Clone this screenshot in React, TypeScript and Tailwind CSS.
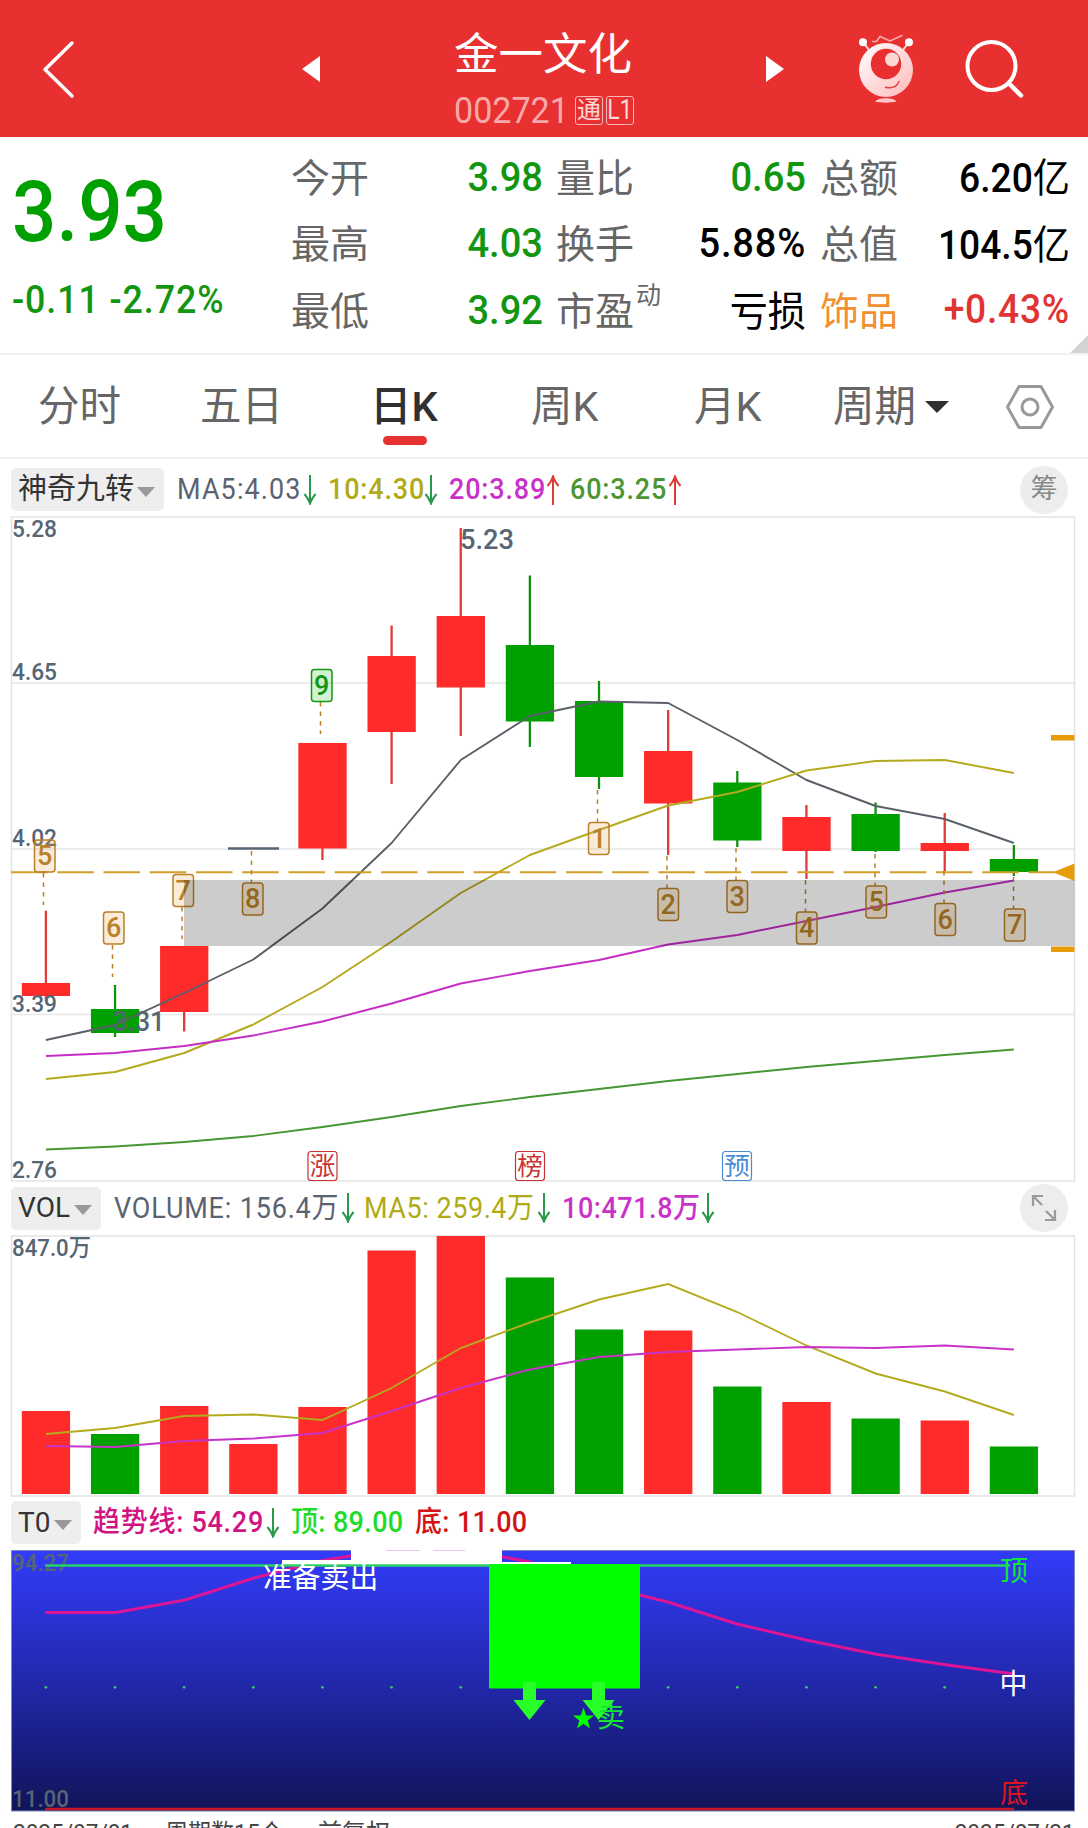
import React from "react";

const RED = "#ff2a2a";
const GREEN = "#00a000";
const SLATE = "#566573";
const FONT = "Roboto, 'Noto Sans CJK SC', sans-serif";

// horizontal centre of the n-th trading day
const dayX = (i: number) => 45.9 + i * 69.14;

const toPoints = (ys: number[]) => ys.map((y, i) => `${dayX(i)},${y}`).join(" ");

interface Candle {
  up: boolean;
  high: number;
  top: number;
  bottom: number;
  low: number;
}

const candles: (Candle | null)[] = [
  { up: true, high: 910.7, top: 983, bottom: 996, low: 1001 },
  { up: false, high: 985, top: 1009, bottom: 1033, low: 1037 },
  { up: true, high: 946, top: 946, bottom: 1012, low: 1031.5 },
  null,
  { up: true, high: 743, top: 743, bottom: 848.5, low: 860 },
  { up: true, high: 625.5, top: 656, bottom: 732, low: 784 },
  { up: true, high: 528, top: 616, bottom: 687.5, low: 736 },
  { up: false, high: 575.5, top: 645, bottom: 721.5, low: 747 },
  { up: false, high: 681, top: 701, bottom: 777, low: 789 },
  { up: true, high: 710, top: 751, bottom: 803.5, low: 855 },
  { up: false, high: 771, top: 782.5, bottom: 840.5, low: 847 },
  { up: true, high: 805, top: 817, bottom: 851, low: 879 },
  { up: false, high: 802.5, top: 814, bottom: 851, low: 852 },
  { up: true, high: 813, top: 843, bottom: 851, low: 871 },
  { up: false, high: 845, top: 859, bottom: 872, low: 876 },
];

const ma5 = [1040, 1025, 993, 959.5, 908.5, 843, 760, 716, 701.5, 703, 740, 780, 806, 819, 843];
const ma10 = [1079, 1072, 1053, 1024.5, 987, 941.5, 893, 855, 830, 805.5, 792, 770.5, 761, 760, 773];
const ma20 = [1056, 1053, 1046, 1035.5, 1021.5, 1003.5, 983.5, 971, 960, 944.5, 935, 921, 907, 892.5, 880.5];
const ma60 = [1149.5, 1146.5, 1142, 1136, 1127, 1117, 1106, 1097, 1089, 1081, 1074, 1067, 1061, 1055, 1049.5];

const counts = [
  { n: "5", x: 34.5, y: 840, line: 873 },
  { n: "6", x: 103.5, y: 912, line: 945 },
  { n: "7", x: 173, y: 874.5, line: 907 },
  { n: "8", x: 242.5, y: 883, line: 851 },
  { n: "9", x: 311.5, y: 669.5, line: 702 },
  { n: "1", x: 588.5, y: 822.5, line: 790 },
  { n: "2", x: 658, y: 888.5, line: 856 },
  { n: "3", x: 727, y: 880.5, line: 848 },
  { n: "4", x: 796.5, y: 912, line: 880 },
  { n: "5", x: 866, y: 886, line: 854 },
  { n: "6", x: 935, y: 903.5, line: 871 },
  { n: "7", x: 1004.5, y: 909, line: 877 },
];

const events = [
  { text: "涨", x: 308, color: "#c83232" },
  { text: "榜", x: 515.5, color: "#c83232" },
  { text: "预", x: 722.5, color: "#4a8ad4" },
];

const volumes = [1411, 1434, 1406, 1444, 1407, 1250.5, 1236, 1277.5, 1329.5, 1330.5, 1386.5, 1402, 1418.5, 1420.5, 1446.5];
const volumeUp = [true, false, true, true, true, true, true, false, false, true, false, true, false, true, false];
const volMa5 = [1434, 1428, 1416, 1414.5, 1420, 1388, 1348, 1322.5, 1299.5, 1284, 1312, 1345.5, 1373.5, 1391.5, 1415];
const volMa10 = [1446, 1447, 1441, 1438.5, 1433, 1411, 1388, 1369.5, 1357, 1352, 1349.5, 1347, 1348, 1345.5, 1349.5];

interface LabelProps {
  x: number;
  y: number;
  width: number;
  size?: number;
  color?: string;
  children: string;
}

function Label({ x, y, width, size = 24, color = SLATE, children }: LabelProps) {
  return (
    <text
      x={x}
      y={y}
      fontSize={size}
      fontWeight="500"
      fill={color}
      textLength={width}
      lengthAdjust="spacingAndGlyphs"
    >
      {children}
    </text>
  );
}

function Header() {
  return (
    <header className="flex h-[137px] bg-[#e83030] text-white">
      <svg className="ml-10 mt-10 h-[60px] w-10" viewBox="0 0 40 60" fill="none">
        <path d="M32 3 5 29.5 32 56" stroke="#fff" strokeWidth="3.5" strokeLinecap="round" strokeLinejoin="round" />
      </svg>
      <svg className="ml-[221px] mt-[55px] h-7 w-5" viewBox="0 0 20 28">
        <path d="M1 14 19 1V27Z" fill="#fff" />
      </svg>
      <div className="ml-[103px] flex w-[270px] flex-col pl-[30px]">
        <h1 className="mt-[33px] text-[44.5px] leading-none whitespace-nowrap">金一文化</h1>
        <div className="mt-[14px] flex items-center">
          <span className="w-[121px] origin-left scale-x-[0.92] text-[37px] leading-none text-[#f7a9a9]">
            002721
          </span>
          <span className="flex h-[29px] w-7 items-center justify-center rounded-[3px] border border-[#f9b6b6] text-[24px] leading-none text-[#fcd8d8]">
            通
          </span>
          <span className="ml-[3px] flex h-[29px] w-7 items-center justify-center rounded-[3px] border border-[#f9b6b6] text-[27px] leading-none text-[#fcd8d8]">
            <span className="scale-x-[0.85]">L1</span>
          </span>
        </div>
      </div>
      <svg className="ml-[71px] mt-[55px] h-7 w-5" viewBox="0 0 20 28">
        <path d="M19 14 1 1V27Z" fill="#fff" />
      </svg>
      {/* robot assistant */}
      <svg className="ml-[70px] mt-8 h-[72px] w-[62px]" viewBox="855 32 62 72" fill="none">
        <defs>
          <linearGradient id="robot" x1="0" y1="0" x2="1" y2="1">
            <stop offset="0" stopColor="#fff" />
            <stop offset="1" stopColor="#ffb9b9" />
          </linearGradient>
        </defs>
        <path d="M863 42 869 50M909 42 903 50" stroke="#fde0e0" strokeWidth="2" />
        <circle cx="863" cy="42.3" r="4" fill="#fff" />
        <circle cx="909" cy="42.3" r="4" fill="#fff" />
        <path d="M872 41.5H876.5L880 36.5 890 41 902.5 35.2" stroke="#f9b0b0" strokeWidth="1.5" />
        <circle cx="886" cy="70" r="27" fill="url(#robot)" />
        <circle cx="886" cy="64" r="15.2" fill="#e83030" />
        <circle cx="892" cy="59.5" r="7" fill="#fdd6d6" />
        <path d="M885.5 87.3C892 88.7 897 86.5 899 81.5" stroke="#e04040" strokeWidth="1.4" strokeLinecap="round" />
        <path d="M875 101.5C878 97 894 97 896.5 101.5C891 103 880 103 875 101.5Z" fill="#ffc4c4" />
      </svg>
      <svg className="ml-[46px] mt-[37px] h-[64px] w-[64px]" viewBox="963 37 64 64" fill="none">
        <circle cx="991.5" cy="66" r="24" stroke="#fff" strokeWidth="4" />
        <path d="M1008.5 83 1021 95.5" stroke="#fff" strokeWidth="4.5" strokeLinecap="round" />
      </svg>
    </header>
  );
}

interface QuoteRowProps {
  open: [string, string];
  middle: [string, string];
  total: [string, string];
  middleColor?: string;
  labelColor?: string;
  totalColor?: string;
  sup?: string;
}

function QuoteRow({
  open,
  middle,
  total,
  middleColor = "font-medium tracking-[0.8px] text-black",
  labelColor = "text-[#666]",
  totalColor = "pt-1 text-black",
  sup,
}: QuoteRowProps) {
  return (
    <div className="flex h-[66.5px] items-center text-[39px] leading-none whitespace-nowrap">
      <span className="w-[130px] pt-1 text-[#666]">{open[0]}</span>
      <span className="w-[122px] origin-right scale-x-[0.93] text-right text-[41px] font-medium text-[#129612]">
        {open[1]}
      </span>
      <span className="relative ml-[13px] w-[100px] pt-1 text-[#666]">
        {middle[0]}
        {sup && <span className="absolute -top-1.5 left-[80px] text-[25px]">{sup}</span>}
      </span>
      <span className={`w-[150px] origin-right scale-x-[0.93] text-right text-[41px] ${middleColor}`}>
        {middle[1]}
      </span>
      <span className={`ml-[14px] w-[100px] pt-1 ${labelColor}`}>{total[0]}</span>
      <span className={`w-[150px] origin-right scale-x-[0.93] text-right text-[40px] font-medium ${totalColor}`}>
        {total[1].replace("亿", "")}
        {total[1].endsWith("亿") && <span className="font-normal">亿</span>}
      </span>
    </div>
  );
}

function Quote() {
  return (
    <section className="relative flex h-[218px] border-b-2 border-[#f0f0f0]">
      <div className="w-[291px] shrink-0 pl-3 font-medium whitespace-nowrap">
        <p className="mt-[33px] origin-left scale-x-[0.92] text-[85px] leading-none text-[#00a000]">3.93</p>
        <p className="mt-[26px] origin-left scale-x-[0.94] text-[38px] leading-none tracking-[1px] text-[#129612]">
          -0.11 -2.72%
        </p>
      </div>
      <div className="pt-[7px]">
        <QuoteRow
          open={["今开", "3.98"]}
          middle={["量比", "0.65"]}
          total={["总额", "6.20亿"]}
          middleColor="font-medium text-[#129612]"
        />
        <QuoteRow open={["最高", "4.03"]} middle={["换手", "5.88%"]} total={["总值", "104.5亿"]} />
        <QuoteRow
          open={["最低", "3.92"]}
          middle={["市盈", "亏损"]}
          total={["饰品", "+0.43%"]}
          middleColor="pt-1 text-black"
          labelColor="text-[#f09030]"
          totalColor="tracking-[0.8px] text-[#e03434]"
          sup="动"
        />
      </div>
      <svg className="absolute right-0 bottom-0 h-[18px] w-[18px]" viewBox="0 0 18 18">
        <path d="M18 0V18H0Z" fill="#d4d4d4" />
      </svg>
    </section>
  );
}

function Tabs() {
  return (
    <nav className="flex h-[104px] items-center border-b-2 border-[#f0f0f0] pt-0.5 text-[41.5px] leading-none whitespace-nowrap text-[#666]">
      <span className="ml-[38px] w-[162px]">分时</span>
      <span className="w-[170px]">五日</span>
      <span className="relative w-[161px] font-medium text-[#303030]">
        日K
        <span className="absolute top-[50px] left-[13px] h-[9px] w-11 rounded-full bg-[#e63232]" />
      </span>
      <span className="w-[163px]">周K</span>
      <span className="w-[139px]">月K</span>
      <span className="w-[92px]">周期</span>
      <svg className="h-3 w-6" viewBox="0 0 24 12">
        <path d="M0 0H24L12 12Z" fill="#303030" />
      </svg>
      <svg className="ml-[56px] h-[46px] w-[50px]" viewBox="0 0 50 46" fill="none" stroke="#999" strokeWidth="3">
        <path d="M14 2.5H36L47.5 23 36 43.5H14L2.5 23Z" strokeLinejoin="round" />
        <circle cx="25" cy="23" r="8" />
      </svg>
    </nav>
  );
}

function Picker({ text, width, size = "text-[29px]" }: { text: string; width: string; size?: string }) {
  return (
    <span
      className={`ml-[11px] flex h-[43px] items-center justify-between rounded-[5px] bg-[#eee] pr-[9px] pl-[7px] text-[#333] ${width} ${size}`}
    >
      {text}
      <svg className="mt-1 h-[10px] w-[18px]" viewBox="0 0 18 10">
        <path d="M0 0H18L9 10Z" fill="#999" />
      </svg>
    </span>
  );
}

function Arrow({ up = false }: { up?: boolean }) {
  return (
    <svg
      className="h-[30px] w-[14px] shrink-0"
      viewBox="0 0 14 30"
      fill="none"
      stroke={up ? "#dc3c32" : "#2a9a4a"}
      strokeWidth="2"
    >
      <path
        d={
          up
            ? "M7 30V2M1.5 11C4 8 6 5 7 1.5 8 5 10 8 12.5 11"
            : "M7 0V28M1.5 19C4 22 6 25 7 28.5 8 25 10 22 12.5 19"
        }
      />
    </svg>
  );
}

function Item({ text, className }: { text: string; className: string }) {
  return (
    <span className={`shrink-0 ${className}`}>
      <span className="inline-block origin-left scale-x-[0.93]">{text}</span>
    </span>
  );
}

function RoundButton({ children }: { children: React.ReactNode }) {
  return (
    <span className="mr-[20px] ml-auto flex size-12 items-center justify-center rounded-full bg-[#ededed] text-[27px] text-[#888]">
      {children}
    </span>
  );
}

function PriceLegend() {
  return (
    <div className="flex h-[57px] items-center pt-1 text-[29px] leading-none whitespace-nowrap">
      <Picker text="神奇九转" width="w-[153px]" />
      <Item text="MA5:4.03" className="ml-[13px] w-[126px] tracking-[1.2px] text-[#5a6370]" />
      <Arrow />
      <Item text="10:4.30" className="ml-[11px] w-[96px] tracking-[0.9px] font-medium text-[#b0aa14]" />
      <Arrow />
      <Item text="20:3.89" className="ml-[11px] w-[97px] tracking-[0.9px] font-medium text-[#c832c8]" />
      <Arrow up />
      <Item text="60:3.25" className="ml-[10px] w-[98px] tracking-[0.9px] font-medium text-[#4b9632]" />
      <Arrow up />
      <RoundButton>筹</RoundButton>
    </div>
  );
}

function PriceChart() {
  return (
    <svg className="block h-[666px] w-[1088px]" viewBox="0 516 1088 666" fill="none" fontFamily={FONT}>
      <rect x="11.5" y="517" width="1063" height="664" stroke="#e2e4e4" strokeWidth="1.5" />
      <path d="M12 683H1074M12 849H1074M12 1014.5H1074" stroke="#e6e6e6" strokeWidth="1.5" />

      {candles.map((c, i) => {
        if (!c) return <path key={i} d="M228 848.5H279" stroke={SLATE} strokeWidth="2.5" />;
        return (
          <g key={i}>
            <path d={`M${dayX(i)} ${c.high}V${c.low}`} stroke={c.up ? "#e03a3a" : "#0f900f"} strokeWidth="2.3" />
            <rect x={dayX(i) - 24.1} y={c.top} width="48.3" height={c.bottom - c.top} fill={c.up ? RED : GREEN} />
          </g>
        );
      })}

      <Label x={12} y={537} width={45}>5.28</Label>
      <Label x={12} y={679.5} width={45}>4.65</Label>
      <Label x={12} y={846} width={45}>4.02</Label>
      <Label x={12} y={1012} width={45}>3.39</Label>
      <Label x={12} y={1177.5} width={45}>2.76</Label>
      <Label x={460} y={549} width={54} size={28}>5.23</Label>
      <Label x={113} y={1031} width={52} size={28}>3.31</Label>

      <g strokeWidth="1.9" strokeLinejoin="round">
        <polyline points={toPoints(ma5)} stroke="#5a6068" />
        <polyline points={toPoints(ma10)} stroke="#b4aa1e" />
        <polyline points={toPoints(ma20)} stroke="#c62cc6" />
        <polyline points={toPoints(ma60)} stroke="#469632" />
      </g>

      {/* latest price */}
      <path d="M11 872.3H1056" stroke="#d2a028" strokeWidth="2" strokeDasharray="36.5 9.75" />
      <path d="M1053 872.3 1074.5 863.5V881ZM1051 735H1074.5V740.5H1051ZM1051 946.5H1074.5V952H1051Z" fill="#e99c0a" />

      {/* nine-turn counts */}
      {counts.map((c, i) => {
        const color = c.n === "9" ? "#149614" : "#b9812a";
        return (
          <g key={i}>
            <path d={`M${c.x + 9} ${c.line}v32`} stroke="#b9812a" strokeWidth="1.5" strokeDasharray="4.5 5" />
            <rect
              x={c.x}
              y={c.y}
              width="20.5"
              height="32"
              rx="3"
              fill={c.n === "9" ? "#32c832" : "#e6aa50"}
              fillOpacity="0.22"
              stroke={color}
              strokeWidth="1.5"
            />
            <text x={c.x + 10.3} y={c.y + 25} fontSize="27" fontWeight="500" fill={color} textAnchor="middle">
              {c.n}
            </text>
          </g>
        );
      })}
      <rect x="184" y="880" width="890.5" height="66" fill="#000" fillOpacity="0.2" />

      {events.map((e) => (
        <g key={e.text}>
          <rect x={e.x} y="1151.5" width="29" height="29" rx="3" fill="#fff" stroke={e.color} strokeWidth="1.2" />
          <text x={e.x + 14.5} y="1175" fontSize="25.5" fill={e.color} textAnchor="middle">
            {e.text}
          </text>
        </g>
      ))}
    </svg>
  );
}

function VolumeLegend() {
  return (
    <div className="flex h-[53px] items-center pb-px text-[29px] leading-none whitespace-nowrap">
      <Picker text="VOL" width="w-[90px]" size="text-[28px]" />
      <Item text="VOLUME: 156.4万" className="ml-[13px] w-[227px] tracking-[0.9px] text-[#5a6370]" />
      <Arrow />
      <Item text="MA5: 259.4万" className="ml-[9px] w-[173px] tracking-[0.6px] text-[#b0aa14]" />
      <Arrow />
      <Item text="10:471.8万" className="ml-[11px] w-[139px] tracking-[0.6px] font-medium text-[#c832c8]" />
      <Arrow />
      <RoundButton>
        <svg className="h-7 w-7" viewBox="0 0 28 28" fill="none" stroke="#999" strokeWidth="2.2">
          <path d="M3 12V2H13M3 2 12 11M25 16V26H15M25 26 16 17" />
        </svg>
      </RoundButton>
    </div>
  );
}

function VolumeChart() {
  return (
    <svg className="block h-[262px] w-[1088px]" viewBox="0 1235 1088 262" fill="none" fontFamily={FONT}>
      <rect x="11.5" y="1236" width="1063" height="260" stroke="#e2e4e4" strokeWidth="1.5" />
      {volumes.map((y, i) => (
        <rect key={i} x={dayX(i) - 24.1} y={y} width="48.3" height={1494 - y} fill={volumeUp[i] ? RED : GREEN} />
      ))}
      <Label x={12} y={1256} width={79}>847.0万</Label>
      <polyline points={toPoints(volMa5)} stroke="#b4aa1e" strokeWidth="1.9" />
      <polyline points={toPoints(volMa10)} stroke="#c832c8" strokeWidth="1.9" />
    </svg>
  );
}

function TrendLegend() {
  return (
    <div className="flex h-[53px] items-center pb-0.5 text-[29px] leading-none whitespace-nowrap">
      <Picker text="T0" width="w-[70px]" size="text-[28px]" />
      <Item text="趋势线: 54.29" className="ml-[12px] w-[173px] tracking-[0.8px] font-medium text-[#d21482]" />
      <Arrow />
      <Item text="顶: 89.00" className="ml-[11px] w-[123px] tracking-[0.4px] font-medium text-[#1edc28]" />
      <Item text="底: 11.00" className="ml-px w-[120px] tracking-[0.4px] font-medium text-[#d21414]" />
    </div>
  );
}

function TrendChart() {
  return (
    <svg className="block h-[262px] w-[1088px]" viewBox="0 1550 1088 262" fill="none" fontFamily={FONT}>
      <defs>
        <linearGradient id="night" x1="0" y1="0" x2="0" y2="1">
          <stop offset="0" stopColor="#323cfa" />
          <stop offset="0.5" stopColor="#2228ac" />
          <stop offset="1" stopColor="#101458" />
        </linearGradient>
      </defs>
      <rect x="11.5" y="1550.5" width="1063" height="260.5" fill="url(#night)" stroke="#8088b8" />
      <Label x={12} y={1571} width={57}>94.27</Label>
      <Label x={12} y={1807} width={57}>11.00</Label>

      <polyline
        points="45,1612.5 116,1612.5 185,1600 254,1578 323,1560.5 392,1549 466,1550 530,1562 599,1585 668,1602 737,1624 806,1640 875,1654 944,1664.5 1014,1674"
        stroke="#dc1496"
        strokeWidth="3"
        strokeLinejoin="round"
      />
      <path d="M282 1560H351V1550H502V1562H571V1565H282Z" fill="#fff" />
      <path d="M386 1550.3H420M433 1550.3H465" stroke="#e6b4e0" />
      <path d="M45 1565.5H1010" stroke="#28d264" strokeWidth="2.5" />
      <rect x="489" y="1564" width="151" height="124.5" fill="#0f0" />
      {candles.map((_, i) => (
        <circle key={i} cx={dayX(i)} cy="1687.3" r="1.4" fill="#32c864" />
      ))}
      {[529.5, 598.5].map((x) => (
        <path key={x} d={`M${x - 6.5} 1682h13v18h9.5l-16 20-16-20h9.5z`} fill="#28ff28" />
      ))}
      <path
        d="M583.5 1707.5 586.2 1715.5H594L587.7 1720.5 590 1728.5 583.5 1723.8 577 1728.5 579.3 1720.5 573 1715.5H580.8Z"
        fill="#0f0"
      />
      <g fontSize="28">
        <text x="597" y="1726.5" fill="#14e632">卖</text>
        <text x="263" y="1587.5" fontSize="28.8" fill="#fff">准备卖出</text>
        <text x="1000" y="1581" fill="#14e63c">顶</text>
        <text x="999.5" y="1694" fill="#fff">中</text>
        <text x="1000" y="1802.5" fill="#dc1420">底</text>
      </g>
      <path d="M45 1809H1014" stroke="#c81428" strokeWidth="2.5" />
    </svg>
  );
}

export default function App() {
  return (
    <main
      className="h-[1828px] w-[1088px] overflow-hidden bg-white"
      style={{ fontFamily: FONT }}
    >
      <Header />
      <Quote />
      <Tabs />
      <PriceLegend />
      <PriceChart />
      <VolumeLegend />
      <VolumeChart />
      <TrendLegend />
      <TrendChart />
      <footer className="flex h-10 px-[13px] pt-[9px] text-[24px] leading-none whitespace-nowrap text-[#444]">
        <span className="w-[152px]">
          <span className="inline-block origin-left scale-x-[0.94]">2025/07/01</span>
        </span>
        <span className="w-[153px]">
          <span className="inline-block origin-left scale-x-[0.96]">周期数15个</span>
        </span>
        <span>前复权</span>
        <span className="ml-auto inline-block origin-right scale-x-[0.94]">2025/07/21</span>
      </footer>
    </main>
  );
}
